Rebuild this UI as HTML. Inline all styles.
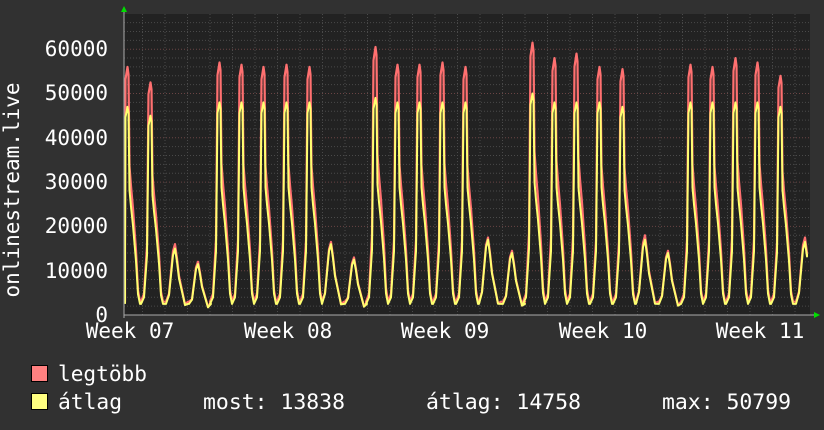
<!DOCTYPE html>
<html><head><meta charset="utf-8"><style>
html,body{margin:0;padding:0;background:#333;}
body{width:824px;height:430px;overflow:hidden;}
svg{display:block;}
text{font-family:"DejaVu Sans Mono","Liberation Mono",monospace;fill:#fff;}
</style></head><body>
<svg id="s" width="824" height="430" xmlns="http://www.w3.org/2000/svg">
<rect width="824" height="430" fill="#313131"/>
<rect x="124" y="14" width="686" height="301" fill="#222"/>
<g id="grid"></g>
<polyline id="red" fill="none" stroke="#ff7070" stroke-width="2.2" stroke-linejoin="round"/>
<polyline id="yel" fill="none" stroke="#ffff70" stroke-width="2" stroke-linejoin="round"/>
<line x1="124" y1="315" x2="816" y2="315" stroke="#aaa" stroke-width="1"/>
<line x1="124" y1="10" x2="124" y2="318" stroke="#aaa" stroke-width="1"/>
<polygon points="121,12 127,12 124,6" fill="#00dd00"/>
<polygon points="814,312 814,318 820,315" fill="#00dd00"/>
<g font-size="21" text-anchor="end">
<text x="108" y="56">60000</text>
<text x="108" y="100">50000</text>
<text x="108" y="145">40000</text>
<text x="108" y="189">30000</text>
<text x="108" y="233">20000</text>
<text x="108" y="278">10000</text>
<text x="108" y="322">0</text>
</g>
<g font-size="21" text-anchor="middle">
<text x="130" y="338">Week 07</text>
<text x="288" y="338">Week 08</text>
<text x="445" y="338">Week 09</text>
<text x="603" y="338">Week 10</text>
<text x="760" y="338">Week 11</text>
</g>
<text font-size="21" text-anchor="middle" transform="translate(19,190) rotate(-90)">onlinestream.live</text>
<rect x="31.5" y="365.5" width="16" height="16" fill="#ff8080" stroke="#000"/>
<rect x="31.5" y="393.5" width="16" height="16" fill="#ffff80" stroke="#000"/>
<g font-size="21">
<text x="58" y="381" textLength="89" lengthAdjust="spacingAndGlyphs">legtöbb</text>
<text x="58" y="409" textLength="64" lengthAdjust="spacingAndGlyphs">átlag</text>
<text x="203" y="409" textLength="142" lengthAdjust="spacingAndGlyphs">most: 13838</text>
<text x="426" y="409" textLength="155" lengthAdjust="spacingAndGlyphs">átlag: 14758</text>
<text x="662" y="409" textLength="129" lengthAdjust="spacingAndGlyphs">max: 50799</text>
</g>
</svg>
<script>
var ns="http://www.w3.org/2000/svg",g=document.getElementById('grid');
function ln(x1,y1,x2,y2,c){var l=document.createElementNS(ns,'line');l.setAttribute('x1',x1);l.setAttribute('y1',y1);l.setAttribute('x2',x2);l.setAttribute('y2',y2);l.setAttribute('stroke',c);l.setAttribute('stroke-dasharray','1,2');l.setAttribute('stroke-width','1');g.appendChild(l);}
function Y(v){return 315-v*0.00443;}
for(var v=2000;v<=66000;v+=2000){ln(124,Y(v),810,Y(v),v%10000==0?'#6a4444':'#4a4a4a');}
for(var x=142.5;x<810;x+=22.5){var maj=Math.abs(((x-209)%157.5))<1||Math.abs(((x-209)%157.5)-157.5)<1;ln(x,14,x,315,maj?'#6a4444':'#4a4a4a');}
var P=[[127,56,47],[150,52.5,45],[175,16,15],[198,12,11.5],[219,57,48],[241,56.5,48],[263,56,48],[286,56.5,48],[309,56,48],[331,16.5,16],[354,13,12.5],[375,60.5,49],[397,56.5,48],[419,56.5,48],[442,57,48],[465,56,48],[488,17.5,17],[512,14.5,14],[532,61.5,50],[554,58,48],[576,59,48],[599,56,48],[622,55.5,47],[645,18,17],[668,14.5,14],[690,56.5,48],[712,56,48],[735,58,48],[757,57,48],[780,54,47],[805,17.5,16.5]];
function build(idx,lo){var pts=[];
 for(var i=0;i<P.length;i++){var p=P[i][0],pk=P[i][idx]*1000,big=pk>30000,k;
  if(big)k=[[-9,lo],[-6,lo*1.6],[-3,pk*0.3],[-1.5,pk*0.95],[0.5,pk],[1.5,pk*0.97],[2.5,pk*0.6],[4,pk*0.52],[6,pk*0.43],[9,pk*0.26],[11,pk*0.1],[13,lo]];
  else k=[[-9,lo],[-6,pk*0.3],[-2,pk*0.9],[0,pk],[2,pk*0.8],[4,pk*0.55],[7,pk*0.35],[10,pk*0.15],[13,lo]];
  for(var j=0;j<k.length;j++){var x=p+k[j][0];if(x<125)x=125;if(x>807)x=807;
   if(i==P.length-1&&j>4){pts.push('807,'+Y(13838).toFixed(1));break;}
   pts.push(x.toFixed(1)+','+Y(k[j][1]).toFixed(1));}
 }
 return pts.join(' ');}
document.getElementById('red').setAttribute('points',build(1,3000));
document.getElementById('yel').setAttribute('points',build(2,2500));
</script>
</body></html>
